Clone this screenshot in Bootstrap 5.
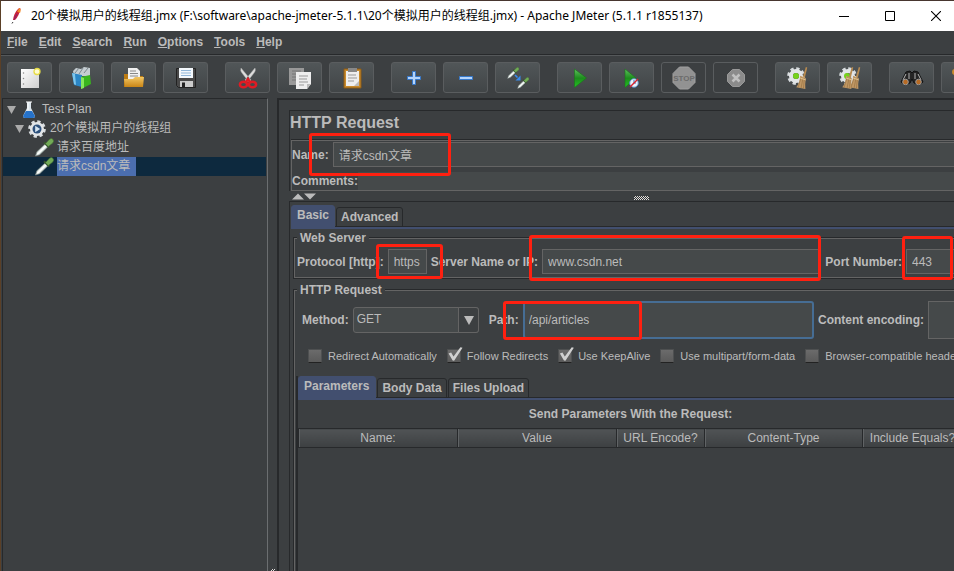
<!DOCTYPE html>
<html lang="zh">
<head>
<meta charset="utf-8">
<meta name="viewport" content="width=device-width, initial-scale=1">
<title>Apache JMeter</title>
<link href="https://cdn.jsdelivr.net/npm/bootstrap@5.3.0/dist/css/bootstrap.min.css" rel="stylesheet">
<style>
:root{--bg:#3c3f41;--field:#45494a;--line:#646464;--dark:#27292b;--ink:#bbbbbb;--blue:#424f6f}
body{background:var(--bg);color:var(--ink);font:12px/14px "Liberation Sans","Noto Sans CJK SC",sans-serif}
.frame{border-top:1px solid #48362f;border-left:1px solid #5b4027}
.titlebar{height:30px;background:#fff;color:#000;font:12px/16px "Noto Sans","Noto Sans CJK SC",sans-serif;padding-left:8px}
.titlebar svg{display:block}
.winbtns{margin-right:-5px}
.winbtn{width:46px;height:30px;border:0;background:none;padding:0;display:flex;align-items:center;justify-content:center;color:#000}
.menubar{height:24px;padding:0 6px 2px;gap:11px;border-bottom:1px solid var(--dark);font-weight:700}
.menubar a{color:var(--ink);text-decoration:none}
.menubar a::first-letter{text-decoration:underline}
.toolbar{height:43px;border-top:1px solid #55585a;padding:6px 0 0 6px;gap:17px}
.tool-group{gap:7px}
.tool{width:45px;height:31px;padding:0;border:1px solid #5a5d5f;border-radius:3px;background:linear-gradient(#515658,#414547);display:flex;align-items:center;justify-content:center;flex:none}
.tool:disabled{background:none;opacity:1}
.tool svg{width:24px;height:24px;display:block}
.tree{width:266px;border:1px solid var(--dark);border-right:1px solid #6b6e70;border-bottom:0;margin-left:1px;padding:1px 1px 0 0;flex:none}
.tree-row{height:19px;gap:4px}
.tree-row svg{display:block;flex:none}
.tree-row.picked{background:#0d293e}
.tree-name{line-height:19px;height:19px}
.picked .tree-name{background:#4b6eaf;padding-right:6px}
.lv0{padding-left:4px}.lv1{padding-left:12px}.lv2{padding-left:31px;gap:3px}
.splitter{width:9px;flex:none}
.grip{width:15px;height:4px;background:repeating-conic-gradient(#ddd 0 25%,#333 0 50%) 0 0/2px 2px}
.grip-end{width:4px;height:2px}
.editor{border:2px solid var(--dark);border-right:0;border-bottom:0;padding:10px 0 0 10px;overflow:hidden;min-width:0}
.wide{margin:0 -12px -12px 0}
.edge{border-left:1px solid var(--dark);border-top:1px solid var(--dark)}
.lower{padding-left:1px}
.heading{font-size:16px;line-height:24px;font-weight:700;height:29px;margin:0}
.names{border:1px solid var(--line);border-right:0;box-shadow:0 -1px 0 var(--dark);margin-left:1px;padding-top:1px}
.field{background:var(--field);border:1px solid var(--line);color:var(--ink);height:25px;padding:0 5px;font:inherit;outline:0;min-width:0;border-radius:0}
.flat{border:0;height:18px}
.comment-line{margin-top:5px}
.lbl{font-weight:700;white-space:nowrap}
.rel{position:relative;display:flex;min-width:0}
.ring{position:absolute;border:3px solid #ff2010;border-radius:3px;pointer-events:none;z-index:2}
.ring-name{left:-24px;width:142px;top:-9px;bottom:-9px}
.ring-proto{left:-12px;right:-16px;top:-5px;bottom:-5px}
.ring-server{left:-13px;right:0;top:-14px;bottom:-7px}
.ring-port{left:-4px;width:51px;top:-13px;bottom:-6px}
.ring-path{left:-20px;width:139px;top:0;bottom:-1px}
.collapse-row{height:10px;padding:2px 0 1px 3px}
.tabs{height:24px;gap:1px;border-bottom:2px solid var(--blue);box-shadow:inset 0 -1px 0 var(--dark)}
.tabs button{border:1px solid var(--dark);border-radius:3px 3px 0 0;background:none;color:var(--ink);font:bold 12px/14px "Liberation Sans",sans-serif;height:20px;padding:0 4px;margin-top:2px;white-space:nowrap}
.tabs button.on{background:var(--blue);border-color:var(--blue);height:24px;margin-top:0;padding:0 5px 4px;z-index:1}
.main-tabs{margin-top:3px}
.group{border:1px solid var(--line);box-shadow:0 0 0 1px var(--dark);margin:2px 0 0 3px;padding:4px 2px 3px}
.group-main{margin-top:5px}
.group legend{float:none;width:auto;font:bold 12px/14px "Liberation Sans",sans-serif;padding:0 3px;margin:0;background:var(--bg)}
.form-line{gap:4px}
.method-line{padding-left:5px}
.combo{position:relative;width:126px;flex:none;margin-right:6px}
.combo select{appearance:none;width:100%;height:26px;background:var(--field);border:1px solid var(--line);border-radius:3px;color:var(--ink);font:inherit;padding:0 3px 2px;outline:0;display:block}
.combo::before{content:"";position:absolute;right:0;top:0;width:21px;height:26px;border:1px solid var(--line);border-radius:0 3px 3px 0;background:var(--bg);pointer-events:none}
.combo::after{content:"";position:absolute;right:5px;top:9px;border:5px solid transparent;border-top:9px solid var(--ink);border-bottom:0;pointer-events:none}
.tall{height:38px}
.focused{border:2px solid #466d94;border-radius:3px;padding:0 4px}
.checks{gap:10px;font-size:11px;padding:10px 0 0 11px;margin-bottom:13px}
.checks label{display:flex;align-items:center;gap:6px;white-space:nowrap}
.checks input{appearance:none;width:14px;height:14px;margin:0;background:linear-gradient(#6b6b6b,#5a5a5a);border:1px solid #4e5051;border-bottom-color:#222;border-radius:1px;position:relative}
.checks input:checked::before{content:"";position:absolute;left:0;top:-3px;width:15px;height:14px;background:#d0d0d0;clip-path:polygon(5% 47%,22% 40%,38% 68%,84% 2%,98% 5%,42% 98%,32% 96%)}
.caption-line{font-weight:700;text-align:center;line-height:14px;padding:7px 0}
.grid-table{width:100%;table-layout:fixed;border-collapse:collapse}
.grid-table th{font-weight:400;text-align:center;height:19px;padding:0;line-height:17px;background:linear-gradient(#505355,#3d4042);border:1px solid var(--dark);box-shadow:inset 1px 0 0 #606365;white-space:nowrap}
.params{border-left:2px solid var(--dark);margin-left:-1px}
.params .tabs button.on{padding:0 6px 4px 5px}
</style>
<script src="https://cdn.jsdelivr.net/npm/bootstrap@5.3.0/dist/js/bootstrap.bundle.min.js"></script>
</head>
<body>
<svg width="0" height="0" class="position-absolute" aria-hidden="true">
<defs>
<linearGradient id="gGreen" x2="0" y2="1"><stop stop-color="#5cc05c"/><stop offset=".5" stop-color="#1d8c1d"/><stop offset="1" stop-color="#22c322"/></linearGradient>
<linearGradient id="gGold" x2="0" y2="1"><stop stop-color="#f3c763"/><stop offset="1" stop-color="#c98516"/></linearGradient>
<linearGradient id="gPaper" x2="1" y2="1"><stop stop-color="#fff"/><stop offset="1" stop-color="#cfcfcf"/></linearGradient>
<symbol id="pipette" viewBox="0 0 20 20"><path d="M1 19l1.500-4.500 9-8.500 3 3-9 8.500z" fill="#d9e4df" stroke="#7c8683" stroke-width=".7"/><path d="M3 17L12.500 8" stroke="#fff" stroke-width="1.500"/><path d="M10 4.500l5.500 5.500" stroke="#37542f" stroke-width="2.200"/><path d="M11.500 6L15.500 1.500q2.500-2 4 0t-.5 4L14.500 9z" fill="#72ab57" stroke="#416e32" stroke-width=".6"/></symbol>
<symbol id="cog" viewBox="0 0 20 20"><circle cx="10" cy="10" r="8.200" fill="none" stroke="#d8dcdf" stroke-width="3.200" stroke-dasharray="3.600 2.840"/><circle cx="10" cy="10" r="5.600" fill="none" stroke="#e2e5e7" stroke-width="4.400"/></symbol>
<symbol id="broom" viewBox="0 0 12 24"><path d="M10 0l1.500.5L9 11l-2-1z" fill="#b88b50"/><path d="M4 9l6 2.500Q9 18 9.500 23L0 21Q4 16 4 9z" fill="#c09764"/><path d="M5 11L2 21M7 12L5 22M8.500 12L7.500 22" stroke="#906a3c" stroke-width=".6"/><path d="M4 11.500l6 2" stroke="#ead2a0" stroke-width=".8"/></symbol>
</defs>
</svg>
<div class="frame vh-100 d-flex flex-column overflow-hidden">
<header class="titlebar d-flex align-items-center">
<svg width="14" height="18" viewBox="0 0 14 18" aria-hidden="true"><path d="M4 13Q5 6 9 2q2-2 2.500 0Q10 9 6 13z" fill="#c8213b"/><path d="M8 4.500L10.500 1q2 1 .5 5z" fill="#f28b28"/><path d="M3 16.500l1-1.500" stroke="#333"/><path d="M5 12.500L8 7" stroke="#7d2476"/></svg>
<span class="ms-2 flex-grow-1 text-nowrap">20个模拟用户的线程组.jmx (F:\software\apache-jmeter-5.1.1\20个模拟用户的线程组.jmx) - Apache JMeter (5.1.1 r1855137)</span>
<div class="winbtns d-flex">
<button class="winbtn" aria-label="Minimize"><svg width="10" height="10"><path d="M0 5.500h10" stroke="#000"/></svg></button>
<button class="winbtn" aria-label="Maximize"><svg width="10" height="10"><path d="M.5.500h9v9h-9z" fill="none" stroke="#000"/></svg></button>
<button class="winbtn" aria-label="Close"><svg width="10" height="10"><path d="M0 0l10 10M10 0L0 10" stroke="#000" stroke-width="1.100"/></svg></button>
</div>
</header>
<nav class="menubar d-flex align-items-center"><a class="d-block" href="#">File</a><a class="d-block" href="#">Edit</a><a class="d-block" href="#">Search</a><a class="d-block" href="#">Run</a><a class="d-block" href="#">Options</a><a class="d-block" href="#">Tools</a><a class="d-block" href="#">Help</a></nav>
<div class="toolbar d-flex flex-nowrap">
<div class="tool-group d-flex">
<button class="tool" aria-label="New"><svg viewBox="0 0 24 24"><path d="M3 3h18v19H3z" fill="url(#gPaper)"/><path d="M5.500 7v.1M5.500 12.500v.1M5.500 18v.1" stroke="#888" stroke-width="1.500" stroke-linecap="round"/><circle cx="19" cy="5.500" r="3" fill="#fffbd0" stroke="#e6dc45" stroke-width="1.300"/></svg></button>
<button class="tool" aria-label="Templates"><svg viewBox="0 0 24 24"><path d="M3 5l3-3 5 1 3-2 6 1v8L4 10z" fill="#c5cdd1"/><path d="M5 7l4-5M9 8l4-6M14 7l4-5" stroke="#7c888e"/><path d="M2 7l10 2v12l-8-2z" fill="#2b86c5"/><path d="M2 7l3 1 1 11-2-1z" fill="#7ec7ed"/><path d="M11 11l9-2 1 9-10 5z" fill="#39b51e"/><path d="M11 11l3 1v10l-3 1z" fill="#86e85c"/></svg></button>
<button class="tool" aria-label="Open"><svg viewBox="0 0 24 24"><path d="M2 8h6l2 2h11v11H2z" fill="#bb7b13"/><path d="M6 2h9l3 3v10H6z" fill="#f1f1f1"/><path d="M8 5h6M8 7.500h8M8 10h8" stroke="#888"/><path d="M2 13h9l2-2h9l-1 10H3z" fill="url(#gGold)"/></svg></button>
<button class="tool" aria-label="Save"><svg viewBox="0 0 24 24"><path d="M2.500 2.500h19v19h-17l-2-2z" fill="#484848" stroke="#222"/><path d="M5 2h14v10H5z" fill="#f3f8fc"/><path d="M7 4.500h10M7 7h10M7 9.500h10" stroke="#91b7da"/><path d="M6 15h13v6H6z" fill="#ccc"/><path d="M8 16.500h3V21H8z" fill="#222"/></svg></button>
</div>
<div class="tool-group d-flex">
<button class="tool" aria-label="Cut"><svg viewBox="0 0 24 24"><path d="M5 2q-1 3 1 5l7 9 2-2zM19 2q1 3-1 5l-7 9-2-2z" fill="#ddd" stroke="#aaa" stroke-width=".5"/><g fill="none" stroke="#e01b24" stroke-width="2.500"><ellipse cx="7.500" cy="18.500" rx="3.600" ry="2.800"/><ellipse cx="16.500" cy="18.500" rx="3.600" ry="2.800"/><path d="M10 16l2-3 2 3"/></g></svg></button>
<button class="tool" aria-label="Copy"><svg viewBox="0 0 24 24"><path d="M1 2h15v17H1z" fill="#999"/><path d="M4 5h9M4 8h6M4 11h5M4 14h5" stroke="#777"/><path d="M8 6h15v12l-4 5H8z" fill="#eee"/><path d="M11 10h9M11 13h8M11 16h9M11 19h5" stroke="#999"/><path d="M23 18l-4 5v-5z" fill="#bbb"/></svg></button>
<button class="tool" aria-label="Paste"><svg viewBox="0 0 24 24"><path d="M4 3h17v19H4z" fill="#c98b2c" stroke="#8b5a16"/><path d="M6 5h13v15H6z" fill="#eee"/><path d="M8 2h9v4H8z" fill="#888"/><path d="M8 9h8M8 12h9M8 15h6" stroke="#999"/><path d="M19 15l-5 5h5z" fill="#bbb"/></svg></button>
</div>
<div class="tool-group d-flex">
<button class="tool" aria-label="Expand all"><svg viewBox="0 0 24 24"><path d="M10.500 5.500h3v5h5v3h-5v5h-3v-5h-5v-3h5z" fill="#b4d4fb" stroke="#3678c9"/></svg></button>
<button class="tool" aria-label="Collapse all"><svg viewBox="0 0 24 24"><path d="M5.500 10.500h13v3h-13z" fill="#b4d4fb" stroke="#3678c9"/></svg></button>
<button class="tool" aria-label="Toggle"><svg viewBox="0 0 24 24"><use href="#pipette" x="1" y="1" width="12" height="12"/><use href="#pipette" x="11" y="11" width="12" height="12"/><path d="M9 9l2.500 2.500" stroke="#378cf0" stroke-width="1.600"/><path d="M14.500 9.500v5h-5z" fill="#378cf0"/></svg></button>
</div>
<div class="tool-group d-flex">
<button class="tool" aria-label="Start"><svg viewBox="0 0 24 24"><path d="M6.500 3L18.500 12 6.500 21.500z" fill="url(#gGreen)" stroke="#197519" stroke-width=".6"/></svg></button>
<button class="tool" aria-label="Start no pauses"><svg viewBox="0 0 24 24"><path d="M5 3l11 9L5 21.500z" fill="url(#gGreen)" stroke="#197519" stroke-width=".6"/><circle cx="14" cy="17" r="4.300" fill="#eaf2fa" stroke="#578bc1"/><path d="M14 14v3h2" stroke="#3477bd" fill="none"/><path d="M10 21l8-8" stroke="#d9232e" stroke-width="1.400"/></svg></button>
<button class="tool" disabled aria-label="Stop"><svg viewBox="0 0 24 24"><path d="M7.500 1h9L23 7.500v9L16.500 23h-9L1 16.500v-9z" fill="#929292" stroke="#a0a0a0"/><text x="12" y="15" font-family="Liberation Sans" font-size="8" font-weight="700" text-anchor="middle" fill="#6c6c6c">STOP</text></svg></button>
<button class="tool" disabled aria-label="Shutdown"><svg viewBox="0 0 24 24"><path d="M8.500 3.500h7l5 5v7l-5 5h-7l-5-5v-7z" fill="#8b8b8b" stroke="#999"/><path d="M8.500 8.500l7 7m0-7l-7 7" stroke="#c0c0c0" stroke-width="2.500"/></svg></button>
</div>
<div class="tool-group d-flex">
<button class="tool" aria-label="Clear"><svg viewBox="0 0 24 24"><use href="#cog" x="1" y="1" width="18" height="18"/><circle cx="10" cy="10" r="3" fill="#75d21c"/><use href="#broom" x="10" y="1" width="12" height="23"/></svg></button>
<button class="tool" aria-label="Clear all"><svg viewBox="0 0 24 24"><use href="#cog" x="1" y="1" width="18" height="18"/><circle cx="9" cy="10" r="3" fill="#75d21c"/><use href="#broom" x="4" y="1" width="12" height="23"/><use href="#broom" x="11" y="1" width="12" height="23"/></svg></button>
</div>
<div class="tool-group d-flex">
<button class="tool" aria-label="Search"><svg viewBox="0 0 24 24"><path d="M6 6l4-1 2 2 2-2 4 1 5 10-4 3-5-2-2-4-2 4-5 2-4-3z" fill="#252525" stroke="#111"/><path d="M6 8l-3 6M18 8l3 6M9 7v6M15 7v6" stroke="#b4b4b4"/><circle cx="5.500" cy="16" r="2.800" fill="#b86b24" stroke="#999"/><circle cx="18.500" cy="16" r="2.800" fill="#b86b24" stroke="#999"/></svg></button>
<button class="tool" aria-label="Reset search"><svg viewBox="0 0 24 24"><circle cx="3" cy="6" r="3" fill="#c98b2c"/><path d="M5 8l14 13" stroke="#c98b2c" stroke-width="3"/></svg></button>
</div>
</div>
<main class="d-flex flex-grow-1 overflow-hidden">
<aside class="tree">
<div class="tree-row lv0 d-flex align-items-center"><svg width="9" height="8"><path d="M0 0h9L4.500 8z" fill="#aaa"/></svg><svg width="18" height="19" viewBox="0 0 18 19"><path d="M7 2h4v6l4 8q0 2-2 2H5q-2 0-2-2l4-8z" fill="#dbe5ec"/><path d="M6 11h6l3 5q0 2-2 2H5q-2 0-2-2z" fill="#2672c9"/><path d="M6 2h6M8 3v7" stroke="#fff"/></svg><span class="tree-name">Test Plan</span></div>
<div class="tree-row lv1 d-flex align-items-center"><svg width="9" height="8"><path d="M0 0h9L4.500 8z" fill="#aaa"/></svg><svg width="18" height="18" viewBox="0 0 20 20"><use href="#cog" width="20" height="20"/><circle cx="10" cy="10" r="5" fill="#2c507b"/><path d="M8 6.500l5.500 3.500L8 13.500z" fill="#d5e5f3"/></svg><span class="tree-name">20个模拟用户的线程组</span></div>
<div class="tree-row lv2 d-flex align-items-center"><svg width="20" height="19"><use href="#pipette" width="20" height="19"/></svg><span class="tree-name">请求百度地址</span></div>
<div class="tree-row lv2 picked d-flex align-items-center"><svg width="20" height="19"><use href="#pipette" width="20" height="19"/></svg><span class="tree-name">请求csdn文章</span></div>
</aside>
<div class="splitter d-flex align-items-end justify-content-center"><div class="grip grip-end"></div></div>
<section class="editor flex-grow-1 d-flex flex-column">
<div class="wide d-flex flex-column flex-grow-1">
<div class="edge">
<h1 class="heading">HTTP Request</h1>
<div class="names">
<div class="d-flex align-items-center form-line">
<label class="lbl" for="nm">Name:</label>
<div class="rel flex-grow-1"><input class="field w-100" id="nm" value="请求csdn文章"><span class="ring ring-name"></span></div>
</div>
<div class="comment-line d-flex align-items-center"><label class="lbl" for="cm">Comments:</label><input class="field flat flex-grow-1" id="cm"></div>
</div>
</div>
<div class="collapse-row d-flex justify-content-between"><svg width="24" height="7"><path d="M0 6.500h12L6 .5zM12 .5h12l-6 6z" fill="#bbb"/></svg><div class="grip align-self-end"></div><span></span></div>
<div class="edge lower flex-grow-1 d-flex flex-column">
<div class="tabs main-tabs d-flex" role="tablist"><button class="on" role="tab">Basic</button><button role="tab">Advanced</button></div>
<fieldset class="group"><legend>Web Server</legend>
<div class="d-flex align-items-center form-line">
<label class="lbl" for="pr">Protocol [http]:</label>
<div class="rel"><input class="field" id="pr" value="https" style="width:39px"><span class="ring ring-proto"></span></div>
<label class="lbl" for="sv">Server Name or IP:</label>
<div class="rel flex-grow-1"><input class="field w-100" id="sv" value="www.csdn.net"><span class="ring ring-server"></span></div>
<label class="lbl" for="pt">Port Number:</label>
<div class="rel"><input class="field" id="pt" value="443" style="width:57px"><span class="ring ring-port"></span></div>
</div>
</fieldset>
<fieldset class="group group-main flex-grow-1"><legend>HTTP Request</legend>
<div class="method-line d-flex align-items-center form-line">
<label class="lbl" for="me">Method:</label>
<div class="combo"><select id="me"><option>GET</option></select></div>
<label class="lbl" for="pa">Path:</label>
<div class="rel flex-grow-1"><input class="field tall focused w-100" id="pa" value="/api/articles"><span class="ring ring-path"></span></div>
<label class="lbl" for="ce">Content encoding:</label>
<input class="field tall" id="ce" style="width:35px">
</div>
<div class="checks d-flex"><label><input type="checkbox">Redirect Automatically</label><label><input type="checkbox" checked>Follow Redirects</label><label><input type="checkbox" checked>Use KeepAlive</label><label><input type="checkbox">Use multipart/form-data</label><label><input type="checkbox">Browser-compatible headers</label></div>
<div class="params h-100">
<div class="tabs d-flex" role="tablist"><button class="on" role="tab">Parameters</button><button role="tab">Body Data</button><button role="tab">Files Upload</button></div>
<div class="caption-line">Send Parameters With the Request:</div>
<table class="grid-table"><colgroup><col style="width:159px"><col style="width:159px"><col style="width:88px"><col style="width:158px"><col></colgroup><thead><tr><th>Name:</th><th>Value</th><th>URL Encode?</th><th>Content-Type</th><th>Include Equals?</th></tr></thead></table>
</div>
</fieldset>
</div>
</div>
</section>
</main>
</div>
</body>
</html>
